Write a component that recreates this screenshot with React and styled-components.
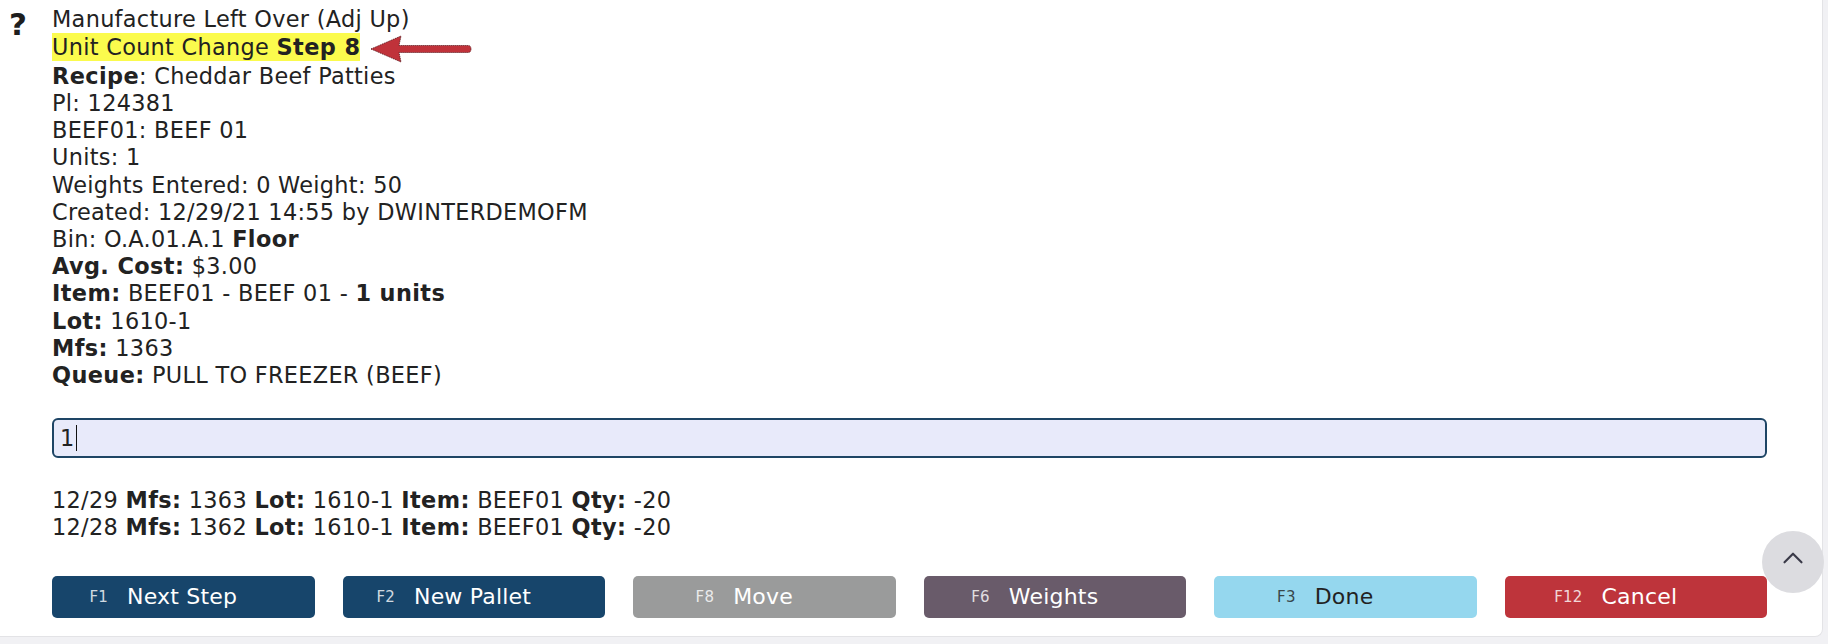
import React from "react";
import styled, { createGlobalStyle } from "styled-components";
import { ChevronUp } from "lucide-react";

const GlobalStyle = createGlobalStyle`
  html, body {
    margin: 0;
    padding: 0;
  }
  body {
    background: #f1f1f4;
    font-family: "DejaVu Sans", Verdana, sans-serif;
    color: #222;
  }
`;

const details = [
  [{ t: "Recipe", b: true }, { t: ": Cheddar Beef Patties" }],
  [{ t: "Pl: 124381" }],
  [{ t: "BEEF01: BEEF 01" }],
  [{ t: "Units: 1" }],
  [{ t: "Weights Entered: 0 Weight: 50" }],
  [{ t: "Created: 12/29/21 14:55 by DWINTERDEMOFM" }],
  [{ t: "Bin: O.A.01.A.1 " }, { t: "Floor", b: true }],
  [{ t: "Avg. Cost:", b: true }, { t: " $3.00" }],
  [
    { t: "Item:", b: true },
    { t: " BEEF01 - BEEF 01 - " },
    { t: "1 units", b: true },
  ],
  [{ t: "Lot:", b: true }, { t: " 1610-1" }],
  [{ t: "Mfs:", b: true }, { t: " 1363" }],
  [{ t: "Queue:", b: true }, { t: " PULL TO FREEZER (BEEF)" }],
];

const history = [
  { date: "12/29", mfs: "1363", lot: "1610-1", item: "BEEF01", qty: "-20" },
  { date: "12/28", mfs: "1362", lot: "1610-1", item: "BEEF01", qty: "-20" },
];

const buttons = [
  { key: "F1", label: "Next Step", variant: "navy" },
  { key: "F2", label: "New Pallet", variant: "navy" },
  { key: "F8", label: "Move", variant: "gray" },
  { key: "F6", label: "Weights", variant: "plum" },
  { key: "F3", label: "Done", variant: "sky" },
  { key: "F12", label: "Cancel", variant: "red" },
];

const variants = {
  navy: { bg: "#17456b", fg: "#ffffff" },
  gray: { bg: "#9a9b9b", fg: "#ffffff" },
  plum: { bg: "#695b6a", fg: "#ffffff" },
  sky: { bg: "#95d7ee", fg: "#222222" },
  red: { bg: "#be343b", fg: "#ffffff" },
};

function PointerArrow() {
  return (
    <ArrowSvg width="102" height="28" viewBox="0 0 102 28" aria-hidden="true">
      <path
        d="M1 14 L31 1 L29 10.5 L98 10.5 Q101 10.5 101 14 Q101 17.5 98 17.5 L29 17.5 L31 27 Z"
        fill="#c0323a"
        stroke="#5c1a1e"
        strokeWidth="0.9"
        strokeDasharray="1.2 0.8"
      />
    </ArrowSvg>
  );
}

export default function App() {
  return (
    <>
      <GlobalStyle />
      <Page>
        <Card>
          <HelpIcon>?</HelpIcon>
          <Content>
            <Details>
              <Line>Manufacture Left Over (Adj Up)</Line>
              <Line>
                <Highlight>
                  Unit Count Change <strong>Step 8</strong>
                </Highlight>
                <PointerArrow />
              </Line>
              {details.map((parts, i) => (
                <Line key={i}>
                  {parts.map((p, j) =>
                    p.b ? <strong key={j}>{p.t}</strong> : <span key={j}>{p.t}</span>
                  )}
                </Line>
              ))}
            </Details>

            <InputBox role="textbox">
              1<Caret />
            </InputBox>

            <History>
              {history.map((h) => (
                <Line key={h.date}>
                  {h.date} <strong>Mfs:</strong> {h.mfs} <strong>Lot:</strong>{" "}
                  {h.lot} <strong>Item:</strong> {h.item} <strong>Qty:</strong>{" "}
                  {h.qty}
                </Line>
              ))}
            </History>

            <ButtonRow>
              {buttons.map((b) => (
                <ActionButton key={b.key} type="button" $variant={b.variant}>
                  <FKey>{b.key}</FKey>
                  {b.label}
                </ActionButton>
              ))}
            </ButtonRow>
          </Content>
        </Card>
        <ScrollTop type="button" aria-label="Scroll to top">
          <ChevronUp size={34} strokeWidth={1.5} />
        </ScrollTop>
      </Page>
    </>
  );
}

const Page = styled.div`
  min-height: 100vh;
  box-sizing: border-box;
  padding: 0 5px 7px 0;
`;

const Card = styled.div`
  display: grid;
  grid-template-columns: 52px 1fr;
  background: #ffffff;
  border: 1px solid #e3e3e6;
  border-top: none;
  border-left: none;
  border-radius: 0 0 8px 0;
  padding: 6px 55px 18px 0;
`;

const HelpIcon = styled.div`
  padding: 5px 0 0 9px;
  font-size: 31px;
  font-weight: 900;
  line-height: 27px;
  color: #1e1e1e;
`;

const Content = styled.div`
  display: flex;
  flex-direction: column;
  font-size: 22.4px;
  letter-spacing: 0.3px;
`;

const Details = styled.div`
  display: flex;
  flex-direction: column;
`;

const Line = styled.div`
  line-height: 27.2px;
  white-space: nowrap;

  strong {
    font-weight: 700;
    letter-spacing: 0.4px;
  }
`;

const Highlight = styled.span`
  display: inline-block;
  background: #fbfb4d;
  line-height: 28px;
`;

const ArrowSvg = styled.svg`
  vertical-align: middle;
  margin-left: 10px;
`;

const InputBox = styled.div`
  display: flex;
  align-items: center;
  box-sizing: border-box;
  height: 40px;
  margin-top: 29px;
  padding: 0 6px;
  border: 2px solid #1e4565;
  border-radius: 6px;
  background: #e8eafa;
  font-size: 22.4px;
  color: #222;
`;

const Caret = styled.span`
  display: inline-block;
  width: 1px;
  height: 26px;
  margin-left: 1px;
  background: #111;
`;

const History = styled.div`
  margin-top: 29px;
`;

const ButtonRow = styled.div`
  display: grid;
  grid-template-columns: repeat(6, 1fr);
  gap: 28px;
  margin-top: 34px;
`;

const ActionButton = styled.button`
  display: flex;
  align-items: center;
  justify-content: center;
  height: 42px;
  padding: 0 40px 0 0;
  border: none;
  border-radius: 5px;
  background: ${(p) => variants[p.$variant].bg};
  color: ${(p) => variants[p.$variant].fg};
  font-family: "DejaVu Sans", Verdana, sans-serif;
  font-size: 22px;
  letter-spacing: 0.2px;
  cursor: pointer;
`;

const FKey = styled.span`
  font-size: 15px;
  opacity: 0.8;
  margin-right: 19px;
`;

const ScrollTop = styled.button`
  position: fixed;
  right: 4px;
  bottom: 51px;
  width: 62px;
  height: 62px;
  display: flex;
  align-items: center;
  justify-content: center;
  padding: 0 0 8px;
  border: none;
  border-radius: 50%;
  background: #dcdce0;
  color: #3a3a48;
  cursor: pointer;
`;
